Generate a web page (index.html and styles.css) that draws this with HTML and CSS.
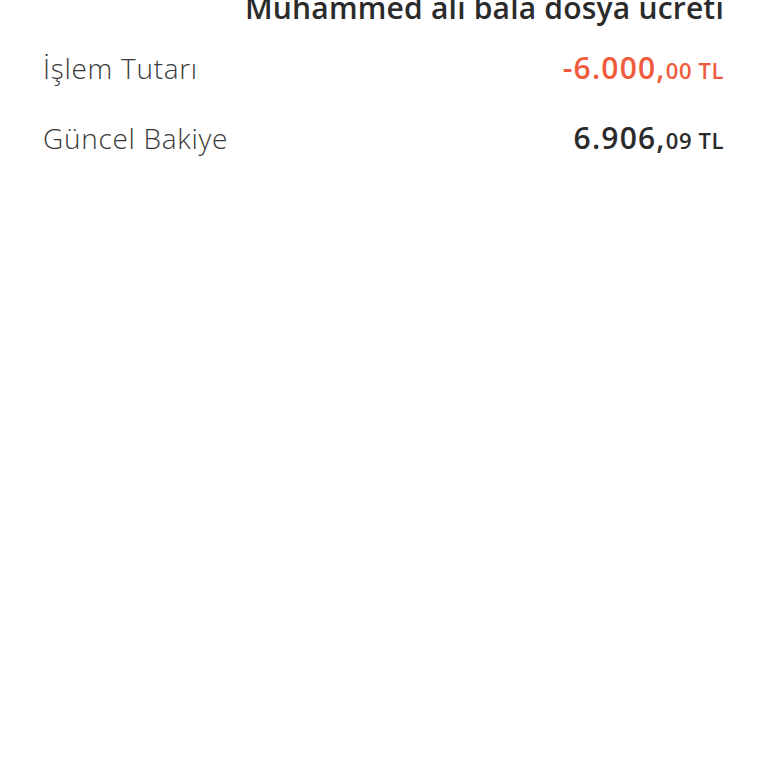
FILE: index.html
```html
<!DOCTYPE html>
<html lang="tr">
<head>
<meta charset="utf-8">
<link rel="stylesheet" href="styles.css">
</head>
<body>
<div class="page">
  <div class="title">Muhammed ali bala dosya ücreti</div>
  <div class="row">
    <span class="label">İşlem Tutarı</span>
    <span class="amount neg">-6.000,<small>00 TL</small></span>
  </div>
  <div class="row">
    <span class="label">Güncel Bakiye</span>
    <span class="amount">6.906,<small>09 TL</small></span>
  </div>
</div>
</body>
</html>
```
FILE: styles.css
```css
html, body { margin: 0; padding: 0; background: #fff; }
body { font-family: "Open Sans", "DejaVu Sans", sans-serif; }
.page {
  padding: 0 44px 0 43px;
  display: flex;
  flex-direction: column;
}
.title {
  text-align: right;
  font-size: 30px;
  font-weight: 600;
  color: #2b2b2b;
  line-height: 30px;
  margin-top: -7px;
  margin-bottom: 10px;
  white-space: nowrap;
  letter-spacing: 0.2px;
}
.row {
  display: flex;
  justify-content: space-between;
  align-items: baseline;
  height: 70px;
  line-height: 70px;
}
.label {
  font-size: 28px;
  font-weight: 300;
  color: #3a3a3a;
  letter-spacing: 0.7px;
}
.amount {
  font-size: 30px;
  font-weight: 600;
  color: #2b2b2b;
  letter-spacing: 1.2px;
}
.amount small {
  font-size: 22px;
  font-weight: 600;
  letter-spacing: 0.6px;
}
.neg { color: #ef5b3d; }
```
